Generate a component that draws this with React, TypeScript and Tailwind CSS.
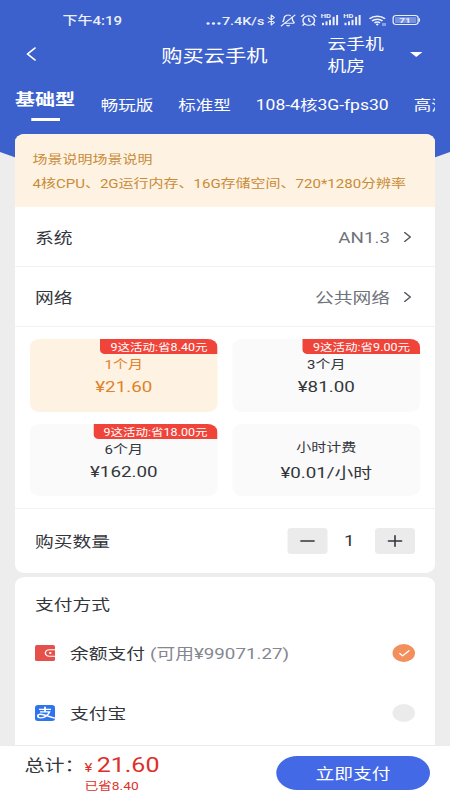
import React, { useState } from 'react';
import { AlarmClock, BellOff, Bluetooth, Check, ChevronLeft, ChevronRight, Minus, Plus } from 'lucide-react';

const tabs = ['基础型', '畅玩版', '标准型', '108-4核3G-fps30', '高清'];

const plans = [
  { name: '1个月', price: '¥21.60', tag: '9这活动:省8.40元' },
  { name: '3个月', price: '¥81.00', tag: '9这活动:省9.00元' },
  { name: '6个月', price: '¥162.00', tag: '9这活动:省18.00元' },
  { name: '小时计费', price: '¥0.01/小时' },
];

const Signal: React.FC = () => (
  <div className="relative w-[14px] h-[12px] shrink-0">
    <span className="absolute left-0 -top-[1px] text-[6px] leading-[6px] font-bold">HD</span>
    <svg className="w-[14px] h-[12px]" viewBox="0 0 14 12" fill="currentColor">
      <rect x="0.6" y="8.8" width="1.6" height="2.4" />
      <rect x="3.4" y="7.4" width="1.6" height="3.8" />
      <rect x="6.2" y="5.8" width="1.6" height="5.4" />
      <rect x="9.1" y="2.800" width="1.6" height="8.4" />
      <rect x="11.9" y="1" width="1.6" height="10.2" />
    </svg>
  </div>
);

const StatusBar: React.FC = () => (
  <div className="relative flex items-center h-[40px] pl-[50px] pr-[24px] text-[12px] leading-[14px] opacity-90">
    <span className="font-medium mt-[1px]">下午4:19</span>
    <div className="ml-auto flex items-center">
      <svg className="w-[12px] h-[3px] mt-[6px] mr-[1px]" viewBox="0 0 12 3" fill="currentColor">
        <circle cx="1.4" cy="1.5" r="1.3" />
        <circle cx="5.8" cy="1.5" r="1.3" />
        <circle cx="10.2" cy="1.5" r="1.3" />
      </svg>
      <span className="w-[33px] mt-[1px] text-[11.5px] whitespace-nowrap font-medium">7.4K/s</span>
      <Bluetooth className="w-[12px] h-[14px]" strokeWidth={2} />
      <BellOff className="w-[13px] h-[13px] ml-[1px] -scale-x-100" strokeWidth={2} />
      <AlarmClock className="w-[14px] h-[14px] ml-[3px] mr-[3px]" strokeWidth={2} />
      <Signal />
      <span className="w-[4px]" />
      <Signal />
      <svg className="w-[14px] h-[11px] ml-[6px]" viewBox="0 0 14 11" fill="none" stroke="currentColor" strokeWidth="1.5">
        <path d="M0.6 3.8a8.6 8.6 0 0 1 12.4 0M2.6 6a5.8 5.8 0 0 1 8.4 0M4.6 8a3.2 3.2 0 0 1 4.4 0" />
        <circle cx="6.8" cy="9.6" r="1" fill="currentColor" stroke="none" />
        <path d="M11.4 8v3M13 8v3" strokeWidth="0.8" />
      </svg>
      <div className="ml-[5px] w-[21px] h-[10px] rounded-[3px] border border-white p-px">
        <div className="w-full h-full rounded-[1px] bg-white/35 text-[8px] leading-[7px] font-bold text-center">71</div>
      </div>
      <div className="w-[1.5px] h-[4px] bg-white rounded-r" />
    </div>
  </div>
);

const Header: React.FC = () => (
  <header className="relative h-[134px] text-white">
    <div className="absolute inset-x-0 top-0 h-[164px] bg-[#3d61cc] [clip-path:polygon(0_0,100%_0,100%_152px,95%_160px,5%_160px,0_152px)]" />
    <StatusBar />
    <div className="relative h-[48px] flex items-center">
      <ChevronLeft className="w-[24px] h-[24px] ml-[13px] -mt-[20px]" strokeWidth={1.5} />
      <h1 className="ml-[92px] -mt-[17px] w-[86px] text-[17px] leading-[24px] whitespace-nowrap">购买云手机</h1>
      <div className="ml-[47px] -mt-[18px] w-[46px] text-[15px] leading-[22px]">云手机机房</div>
      <svg className="ml-[20px] -mt-[19px] w-[10px] h-[5px]" viewBox="0 0 10 5" fill="currentColor">
        <path d="M0 0h10L5 5z" />
      </svg>
    </div>
    <nav className="relative flex gap-[20px] ml-[12px] mr-[12px] overflow-hidden h-[36px] text-[14px] leading-[34px] whitespace-nowrap">
      {tabs.map((t, i) =>
        i === 0 ? (
          <div key={t} className="flex flex-col items-center text-[16px] leading-[23px] font-bold shrink-0">
            {t}
            <span className="w-[23px] h-[3px] mt-[7px] bg-white" />
          </div>
        ) : (
          <span key={t} className="shrink-0 relative left-[0.6px]">{t}</span>
        )
      )}
    </nav>
  </header>
);

const OptionRow: React.FC<{ label: string; value: string }> = ({ label, value }) => (
  <div className="h-[60px] border-b border-[#f2f2f2] flex items-center pl-[16px] pr-[13px] pt-[2px]">
    <span>{label}</span>
    <span className="ml-auto text-[#6f737a]">{value}</span>
    <ChevronRight className="w-[18px] h-[20px] -mt-[2px] ml-[5px] text-[#55585e]" strokeWidth={1.5} />
  </div>
);

const Radio: React.FC<{ checked: boolean }> = ({ checked }) => (
  <span className={`ml-auto w-[18px] h-[18px] rounded-full flex items-center justify-center ${checked ? 'bg-[#f28f5c]' : 'bg-[#ebebeb]'}`}>
    {checked && <Check className="w-[11px] h-[11px] text-white" strokeWidth={2.5} />}
  </span>
);

const App: React.FC = () => {
  const [plan, setPlan] = useState(0);
  const [count, setCount] = useState(1);
  const [pay, setPay] = useState(0);

  return (
    <div className="w-[450px] h-[800px] overflow-hidden">
      <div className="w-[360px] h-[800px] origin-top-left scale-x-125 flex flex-col bg-[#ededed] text-[15px] leading-[20px] text-[#33363b] [font-family:Roboto,'Noto_Sans_CJK_SC',sans-serif]">
        <Header />

        <main className="relative flex-1 min-h-0 overflow-hidden px-[12px]">
          <section className="h-[439px] bg-white rounded-[8px] overflow-hidden">
            <div className="h-[73px] bg-[#fef2e2] px-[14px] pt-[14px] text-[12px] leading-[24px] text-[#c98b38] whitespace-nowrap">
              <p>场景说明场景说明</p>
              <p>4核CPU、2G运行内存、16G存储空间、720*1280分辨率</p>
            </div>
            <OptionRow label="系统" value="AN1.3" />
            <OptionRow label="网络" value="公共网络" />

            <div className="grid grid-cols-2 grid-rows-2 gap-[12px] p-[12px] h-[182px] border-b border-[#f2f2f2]">
              {plans.map((p, i) => (
                <button
                  key={p.name}
                  onClick={() => setPlan(i)}
                  className={`relative flex flex-col items-center rounded-[8px] overflow-hidden ${
                    p.tag ? 'pt-[16px]' : 'pt-[14px]'
                  } ${i === plan ? 'bg-[#fef2e2] text-[#e0812b]' : 'bg-[#fafafa]'}`}
                >
                  {p.tag && (
                    <span className="absolute top-0 right-0 h-[15px] px-[8px] rounded-bl-[4px] bg-[#f0443a] text-white text-[10px] leading-[18px] whitespace-nowrap">
                      {p.tag}
                    </span>
                  )}
                  <span className="text-[12px] leading-[20px]">{p.name}</span>
                  <span className={p.tag ? 'leading-[25px]' : 'leading-[31px]'}>{p.price}</span>
                </button>
              ))}
            </div>

            <div className="h-[64px] flex items-center pl-[16px] pr-[16px]">
              <span className="mt-[2px]">购买数量</span>
              <button onClick={() => setCount(Math.max(1, count - 1))} className="ml-auto w-[32px] h-[26px] rounded-[3px] bg-[#ebebeb] flex items-center justify-center">
                <Minus className="w-[18px] h-[18px]" strokeWidth={1.7} />
              </button>
              <span className="w-[38px] pr-[3px] text-center">{count}</span>
              <button onClick={() => setCount(count + 1)} className="w-[32px] h-[26px] rounded-[3px] bg-[#ebebeb] flex items-center justify-center">
                <Plus className="w-[18px] h-[18px]" strokeWidth={1.7} />
              </button>
            </div>
          </section>

          <section className="mt-[4px] h-[200px] bg-white rounded-t-[8px] px-[16px]">
            <h2 className="pt-[18px] h-[46px]">支付方式</h2>
            <div onClick={() => setPay(0)} className="h-[60px] flex items-center">
              <svg className="w-[16px] h-[16px] mr-[12px]" viewBox="0 0 16 16">
                <rect width="16" height="16" rx="1.5" fill="#e5504b" />
                <path d="M16 4.8h-4.5a3.2 3.2 0 0 0 0 6.4H16" fill="none" stroke="#fff" strokeWidth="1.1" />
                <circle cx="12.2" cy="8" r="1" fill="#fff" />
              </svg>
              <span className="mt-[2px]">余额支付</span>
              <span className="mt-[2px] ml-[4px] text-[#85878f]">(可用¥99071.27)</span>
              <Radio checked={pay === 0} />
            </div>
            <div onClick={() => setPay(1)} className="h-[60px] flex items-center">
              <svg className="w-[16px] h-[16px] mr-[12px]" viewBox="0 0 16 16">
                <rect width="16" height="16" rx="2.5" fill="#2f74ee" />
                <path d="M3.2 4.4h9.6M8 1.8v5M4 6.9h7.6c-.9 2.800-3.600 6-6.800 6-3.400 0-3.400-3.700-.2-3.700 2.800 0 6 2.400 11.400 4" fill="none" stroke="#fff" strokeWidth="1.4" />
              </svg>
              <span className="mt-[2px]">支付宝</span>
              <Radio checked={pay === 1} />
            </div>
          </section>
        </main>

        <footer className="relative h-[55px] bg-white border-t border-[#ececec] flex items-start pl-[19.5px] pr-[16px]">
          <span className="text-[16px] leading-[40px] w-[48px] whitespace-nowrap">总计：</span>
          <div className="text-[#dd3029]">
            <div className="flex items-baseline leading-[24px] mt-[7px]">
              <span className="text-[12px] mr-[3.5px]">¥</span>
              <span className="text-[20px]">21.60</span>
            </div>
            <div className="text-[11px] leading-[14px]">已省8.40</div>
          </div>
          <button className="ml-auto mt-[10px] pt-[1px] w-[123px] h-[34px] rounded-full bg-[#4369e6] text-white">立即支付</button>
        </footer>
      </div>
    </div>
  );
};

export default App;
